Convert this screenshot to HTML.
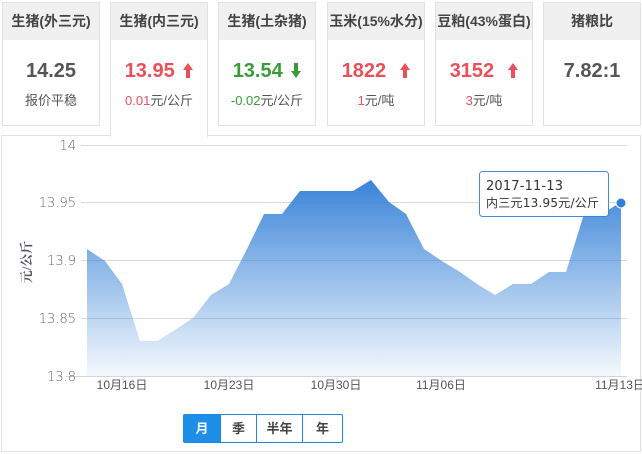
<!DOCTYPE html>
<html><head><meta charset="utf-8"><style>
*{margin:0;padding:0;box-sizing:border-box}
body{width:642px;height:454px;background:#fff;font-family:"Liberation Sans","Noto Sans CJK SC",sans-serif;position:relative;overflow:hidden}
.card{position:absolute;top:2px;width:98px;height:124px;border:1px solid #e2e2e2;background:#fff;text-align:center}
.card .h{height:37px;background:#f0f0f0;line-height:37px;font-size:14px;color:#444;font-weight:bold}
.card .v{margin-top:19px;font-size:20px;font-weight:bold;color:#555;line-height:24px}
.card .s{margin-top:7px;font-size:13px;color:#555}
.red{color:#e9505a!important}.green{color:#3a9b3a!important}
.ar{display:inline-block;vertical-align:-1px;margin-left:3px}
.panel{position:absolute;left:1px;top:135px;width:640px;height:317px;border:1px solid #e2e2e2}
.btns{position:absolute;left:183px;top:414px;height:29px;display:flex;border:1px solid #1e88e5;border-radius:2px}
.btns div{line-height:27px;font-size:13px;font-weight:bold;color:#444;text-align:center;border-left:1px solid #1e88e5}
.btns div:first-child{border-left:none;background:#1e8fe8;color:#fff}
</style></head><body>
<div class="panel"></div>
<div class="card" style="left:2px"><div class="h">生猪(外三元)</div><div class="v">14.25</div><div class="s">报价平稳</div></div>
<div class="card" style="left:110px;height:135px;border-bottom:none;z-index:2"><div class="h">生猪(内三元)</div><div class="v red">13.95 <svg class="ar" width="10" height="15" viewBox="0 0 10 15"><path d="M5 0L10 7H7V15H3V7H0Z" fill="#e9505a"/></svg></div><div class="s"><span class="red">0.01</span>元/公斤</div></div>
<div class="card" style="left:218px"><div class="h">生猪(土杂猪)</div><div class="v green">13.54 <svg class="ar" width="10" height="15" viewBox="0 0 10 15"><path d="M5 15L10 8H7V0H3V8H0Z" fill="#3a9b3a"/></svg></div><div class="s"><span class="green">-0.02</span>元/公斤</div></div>
<div class="card" style="left:327px"><div class="h">玉米(15%水分)</div><div class="v red">1822 &nbsp;<svg class="ar" width="10" height="15" viewBox="0 0 10 15"><path d="M5 0L10 7H7V15H3V7H0Z" fill="#e9505a"/></svg></div><div class="s"><span class="red">1</span>元/吨</div></div>
<div class="card" style="left:435px"><div class="h">豆粕(43%蛋白)</div><div class="v red">3152 &nbsp;<svg class="ar" width="10" height="15" viewBox="0 0 10 15"><path d="M5 0L10 7H7V15H3V7H0Z" fill="#e9505a"/></svg></div><div class="s"><span class="red">3</span>元/吨</div></div>
<div class="card" style="left:543px"><div class="h">猪粮比</div><div class="v">7.82:1</div></div>
<svg style="position:absolute;left:0;top:0" width="642" height="454">
<defs><linearGradient id="g" x1="0" y1="0" x2="0" y2="1"><stop offset="0" stop-color="#3a84d8"/><stop offset="1" stop-color="#3a84d8" stop-opacity="0.05"/></linearGradient></defs>
<g stroke="#d8d8d8" stroke-width="1">
<line x1="81" y1="145.5" x2="627" y2="145.5"/><line x1="81" y1="202.5" x2="627" y2="202.5"/><line x1="81" y1="260.5" x2="627" y2="260.5"/><line x1="81" y1="318.5" x2="627" y2="318.5"/></g>
<polygon fill="url(#g)" points="87,376 87,249 105,261 122,284 140,341 157,341 175,330 193,318 211,295 229,284 247,249 264,214 282,214 300,191 318,191 336,191 353,191 371,180 389,202 406,214 424,249 442,261 460,272 477,284 495,295 513,284 531,284 549,272 566,272 584,214 602,214 621,202 621,376"/>
<line x1="66" y1="376.5" x2="627" y2="376.5" stroke="#ccd6eb"/>
<g stroke="#ccd6eb"><line x1="123" y1="376" x2="123" y2="386"/><line x1="230" y1="376" x2="230" y2="386"/><line x1="337" y1="376" x2="337" y2="386"/><line x1="442" y1="376" x2="442" y2="386"/></g>
<g font-size="13" fill="#666" text-anchor="end" font-family="DejaVu Sans,sans-serif" font-weight="300"><text x="76" y="150">14</text><text x="76" y="207">13.95</text><text x="76" y="265">13.9</text><text x="76" y="323">13.85</text><text x="76" y="381">13.8</text></g>
<g font-size="12" fill="#555" text-anchor="middle" font-family="Liberation Sans,Noto Sans CJK SC,sans-serif"><text x="122" y="389">10月16日</text><text x="229" y="389">10月23日</text><text x="336" y="389">10月30日</text><text x="441" y="389">11月06日</text><text x="620" y="389">11月13日</text></g>
<text transform="translate(31,262) rotate(-90)" font-size="13" fill="#556" text-anchor="middle" font-weight="bold" font-family="Liberation Serif,Noto Serif CJK SC,serif">元/公斤</text>
<rect x="479.5" y="171.5" width="129" height="45" rx="3" fill="#fff" stroke="#3a84d8" opacity="0.95"/>
<text x="486" y="190" font-size="13" fill="#333" font-family="DejaVu Sans,Noto Sans CJK SC,sans-serif" textLength="77">2017-11-13</text>
<text x="486" y="207" font-size="12" fill="#333" font-family="DejaVu Sans,Noto Sans CJK SC,sans-serif" textLength="113">内三元13.95元/公斤</text>
<circle cx="621" cy="203" r="5" fill="#2f7ed8" stroke="#fff" stroke-width="1"/>
</svg>
<div class="btns"><div style="width:36px">月</div><div style="width:36px">季</div><div style="width:46px">半年</div><div style="width:40px">年</div></div>
</body></html>
